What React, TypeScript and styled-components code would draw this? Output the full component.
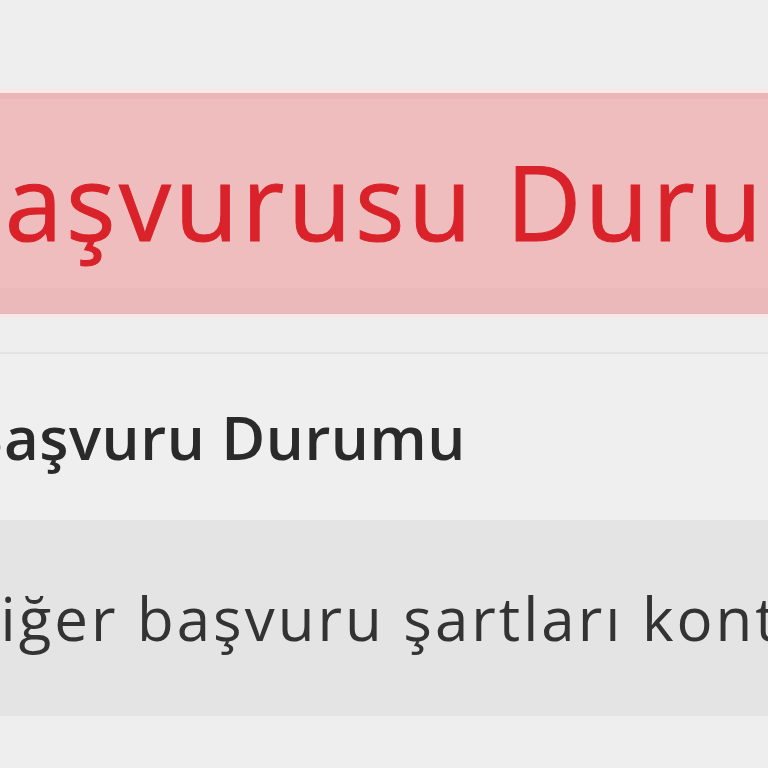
import React from "react";
import styled, { createGlobalStyle } from "styled-components";

const GlobalStyle = createGlobalStyle`
    html, body {
        margin: 0;
        padding: 0;
        background: #eeeeee;
        overflow: hidden;
        font-family: "Open Sans", "Liberation Sans", Arial, sans-serif;
    }
`;

const Page = styled.div`
    width: 768px;
    height: 768px;
    overflow: hidden;
    padding-top: 88px;
    box-sizing: border-box;
`;

const Alert = styled.div`
    height: 230px;
    box-sizing: border-box;
    background-color: #efbdbd;
    border-top: 5px solid #f8e8e8;
    border-bottom: 4px solid #f8e8e8;
    box-shadow: inset 0 6px 0 #eab6b6, inset 0 -26px 0 #ebb9b9;
    display: flex;
    align-items: center;
    white-space: nowrap;
    overflow: hidden;
`;

const AlertText = styled.h1`
    margin: -6px 0 0 -66px;
    font-size: 104px;
    font-weight: normal;
    letter-spacing: 3.5px;
    color: #d9222a;
    line-height: 1;
    -webkit-text-stroke: 1px #d9222a;
`;

const Section = styled.div`
    margin-top: 34px;
    border-top: 2px solid #e3e3e3;
    background-color: #efefef;
`;

const SectionTitle = styled.h2`
    margin: 0 0 0 -36px;
    height: 166px;
    display: flex;
    align-items: center;
    font-size: 60px;
    font-weight: 600;
    letter-spacing: 0.5px;
    color: #2a2a2a;
    white-space: nowrap;
`;

const Row = styled.div`
    height: 196px;
    background-color: #e4e4e4;
    display: flex;
    align-items: center;
    white-space: nowrap;
    overflow: hidden;
`;

const RowText = styled.p`
    margin: 0 0 0 -46px;
    font-size: 60px;
    color: #333333;
    letter-spacing: 3px;
`;

const App = () => {
    return (
        <Page>
            <GlobalStyle />
            <Alert>
                <AlertText>Başvurusu Durumu</AlertText>
            </Alert>
            <Section>
                <SectionTitle>Başvuru Durumu</SectionTitle>
                <Row>
                    <RowText>Diğer başvuru şartları kontrol ediliyor.</RowText>
                </Row>
            </Section>
        </Page>
    );
};

export default App;
